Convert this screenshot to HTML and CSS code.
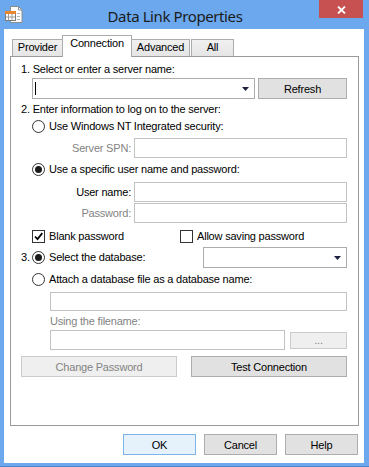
FILE: index.html
```html
<!DOCTYPE html>
<html lang="en">
<head>
    <meta charset="UTF-8">
    <title>Data Link Properties</title>
    <link rel="stylesheet" href="styles.css">
</head>
<body>
    <div class="window">
        <div class="titlebar">
            <svg class="app-icon" width="18" height="17" viewBox="0 0 18 17">
                <path d="M5.5 0.5h8l3.5 3.5v12.5h-11.5z" fill="#fff" stroke="#8c8c8c"/>
                <path d="M13.5 0.5v3.5h3.5" fill="none" stroke="#8c8c8c"/>
                <path d="M12 7.5h3M12 10.5h3M12 13.5h3" stroke="#b5b5b5"/>
                <rect x="0.5" y="5.5" width="10" height="9" fill="#fff" stroke="#7d7d7d"/>
                <rect x="0" y="5" width="11" height="3" fill="#e8862e"/>
                <path d="M1 11h9M3.5 8v6M7 8v6" stroke="#9a9a9a"/>
            </svg>
            <div class="title">Data Link Properties</div>
            <div class="close-btn">
                <svg width="9" height="8" viewBox="0 0 9 8">
                    <path d="M1 0.5l7 7M8 0.5l-7 7" stroke="#fff" stroke-width="1.8"/>
                </svg>
            </div>
        </div>

        <div class="client">
            <div class="tabs">
                <div class="tab tab-provider">Provider</div>
                <div class="tab tab-connection active">Connection</div>
                <div class="tab tab-advanced">Advanced</div>
                <div class="tab tab-all">All</div>
            </div>

            <div class="panel">
                <div class="row step-one">1. Select or enter a server name:</div>

                <div class="row server-row">
                    <div class="combo server-combo">
                        <span class="caret"></span>
                        <svg class="arrow" width="7" height="4" viewBox="0 0 7 4"><path d="M0 0h7l-3.5 4z" fill="#1e2040"/></svg>
                    </div>
                    <button class="btn refresh-btn">Refresh</button>
                </div>

                <div class="row step-two">2. Enter information to log on to the server:</div>

                <div class="row option nt-option">
                    <span class="radio"></span>
                    <span>Use Windows NT Integrated security:</span>
                </div>

                <div class="row field spn-field">
                    <label class="field-label disabled">Server SPN:</label>
                    <div class="input"></div>
                </div>

                <div class="row option user-option">
                    <span class="radio on"></span>
                    <span>Use a specific user name and password:</span>
                </div>

                <div class="row field user-field">
                    <label class="field-label">User name:</label>
                    <div class="input"></div>
                </div>
                <div class="row field pass-field">
                    <label class="field-label disabled">Password:</label>
                    <div class="input"></div>
                </div>

                <div class="row check-row">
                    <div class="check-item blank-check">
                        <span class="checkbox">
                            <svg width="11" height="11" viewBox="0 0 11 11"><path d="M2 5.5l2.5 2.6 4.8-6" fill="none" stroke="#000" stroke-width="1.7"/></svg>
                        </span>
                        <span>Blank password</span>
                    </div>
                    <div class="check-item">
                        <span class="checkbox"></span>
                        <span>Allow saving password</span>
                    </div>
                </div>

                <div class="row db-row">
                    <span class="step-num">3.</span>
                    <span class="radio on"></span>
                    <span class="db-label">Select the database:</span>
                    <div class="combo db-combo">
                        <svg class="arrow" width="7" height="4" viewBox="0 0 7 4"><path d="M0 0h7l-3.5 4z" fill="#1e2040"/></svg>
                    </div>
                </div>

                <div class="row option attach-option">
                    <span class="radio"></span>
                    <span>Attach a database file as a database name:</span>
                </div>

                <div class="row attach-input">
                    <div class="input"></div>
                </div>

                <div class="row using-label disabled">Using the filename:</div>

                <div class="row file-row">
                    <div class="input file-input"></div>
                    <button class="btn disabled-btn browse-btn">...</button>
                </div>

                <div class="row action-row">
                    <button class="btn disabled-btn wide-btn">Change Password</button>
                    <button class="btn wide-btn">Test Connection</button>
                </div>
            </div>

            <div class="dialog-buttons">
                <button class="btn dialog-btn default-btn">OK</button>
                <button class="btn dialog-btn">Cancel</button>
                <button class="btn dialog-btn">Help</button>
            </div>
        </div>
    </div>
</body>
</html>
```

FILE: styles.css
```css
* {
    box-sizing: border-box;
}
body {
    margin: 0;
    font-family: "Liberation Sans", Arial, sans-serif;
    font-size: 11px;
    letter-spacing: -0.2px;
    color: #000;
}
.window {
    width: 369px;
    height: 467px;
    background-color: #6ba8ed;
    padding: 0 5px 3px 4px;
    border-bottom: 1px solid #4d86c9;
    display: flex;
    flex-direction: column;
}

/* title bar */
.titlebar {
    height: 29px;
    display: flex;
    align-items: flex-start;
}
.app-icon {
    margin: 6px 0 0 1px;
    flex-shrink: 0;
}
.title {
    flex: 1;
    text-align: center;
    font-family: "Noto Sans", sans-serif;
    font-size: 15px;
    letter-spacing: -0.4px;
    line-height: 20px;
    padding: 6px 0 0 8px;
    color: #1b1b1b;
}
.close-btn {
    width: 44px;
    height: 18px;
    margin-right: 1px;
    background-color: #c75050;
    display: flex;
    align-items: center;
    justify-content: center;
    padding-top: 1px;
}

/* client area */
.client {
    flex: 1;
    background-color: #fff;
    padding: 6px 5px 0 6px;
}
.tabs {
    display: flex;
    align-items: flex-end;
    height: 21px;
    padding-left: 2px;
    position: relative;
    z-index: 1;
}
.tab {
    height: 17px;
    border: 1px solid #acacac;
    border-bottom: none;
    background: linear-gradient(#f0f0f0, #e5e5e5);
    text-align: center;
    line-height: 13px;
    padding-top: 1px;
}
.tab-provider { width: 51px; }
.tab-connection { width: 70px; margin-left: -1px; }
.tab-advanced { width: 59px; margin-left: -1px; }
.tab-all { width: 43px; margin-left: 1px; }
.tab.active {
    height: 22px;
    margin-bottom: -1px;
    background: #fff;
    padding-top: 1px;
}

.panel {
    width: 349px;
    height: 370px;
    border: 1px solid #9a9a9a;
    padding: 0 11px 0 10px;
}
.row {
    display: flex;
    align-items: center;
    height: 13px;
    line-height: 13px;
    white-space: nowrap;
}
.disabled {
    color: #838383;
}
.step-one { margin-top: 6px; }
.server-row { margin-top: 2px; height: 21px; }
.step-two { margin-top: 4px; }
.nt-option { margin-top: 4px; }
.spn-field { margin-top: 5px; height: 20px; }
.user-option { margin-top: 5px; }
.user-field { margin-top: 6px; height: 20px; }
.pass-field { margin-top: 1px; height: 20px; }
.check-row { margin-top: 7px; }
.db-row { margin-top: 4px; height: 21px; }
.attach-option { margin-top: 5px; }
.attach-input { margin-top: 6px; height: 19px; padding-left: 29px; }
.using-label { margin-top: 4px; padding-left: 29px; }
.file-row { margin-top: 2px; height: 20px; padding-left: 29px; }
.action-row { margin-top: 6px; height: 21px; justify-content: space-between; }

.option {
    padding-left: 11px;
}
.radio {
    width: 13px;
    height: 13px;
    border: 1px solid #333;
    border-radius: 50%;
    background-color: #fff;
    margin-right: 4px;
    flex-shrink: 0;
    display: flex;
    align-items: center;
    justify-content: center;
}
.radio.on::after {
    content: "";
    width: 7px;
    height: 7px;
    border-radius: 50%;
    background-color: #1a1a1a;
}
.checkbox {
    width: 13px;
    height: 13px;
    border: 1px solid #333;
    background-color: #fff;
    margin-right: 4px;
    display: flex;
    flex-shrink: 0;
}
.check-item {
    display: flex;
    align-items: center;
}
.blank-check {
    margin-left: 11px;
    width: 148px;
}

.combo {
    height: 100%;
    border: 1px solid #acacac;
    background-color: #fff;
    position: relative;
}
.server-combo {
    width: 223px;
    margin-left: 11px;
}
.db-combo {
    width: 144px;
    margin-left: auto;
}
.arrow {
    position: absolute;
    right: 5px;
    top: 8px;
}
.caret {
    position: absolute;
    left: 2px;
    top: 3px;
    width: 1px;
    height: 13px;
    background-color: #000;
}
.step-num {
    width: 11px;
}

.field-label {
    width: 110px;
    margin-right: 3px;
    text-align: right;
}
.input {
    height: 100%;
    flex: 1;
    border: 1px solid #c3c3c3;
    background-color: #fff;
}
.file-input {
    flex: none;
    width: 235px;
}

.btn {
    font-family: "Liberation Sans", Arial, sans-serif;
    font-size: 11px;
    letter-spacing: -0.2px;
    color: #000;
    background-color: #e1e1e1;
    border: 1px solid #adadad;
    padding: 0;
    height: 100%;
}
.refresh-btn {
    width: 89px;
    margin-left: 3px;
}
.disabled-btn {
    color: #838383;
    background-color: #efefef;
    border-color: #cbcbcb;
}
.browse-btn {
    width: 57px;
    height: 17px;
    margin-left: 5px;
}
.wide-btn {
    width: 156px;
}

.dialog-buttons {
    display: flex;
    justify-content: flex-end;
    gap: 8px;
    margin-top: 8px;
    padding-right: 1px;
}
.dialog-btn {
    width: 73px;
    height: 21px;
}
.default-btn {
    background-color: #e5f1fb;
    border-color: #7eb4ea;
}
```
